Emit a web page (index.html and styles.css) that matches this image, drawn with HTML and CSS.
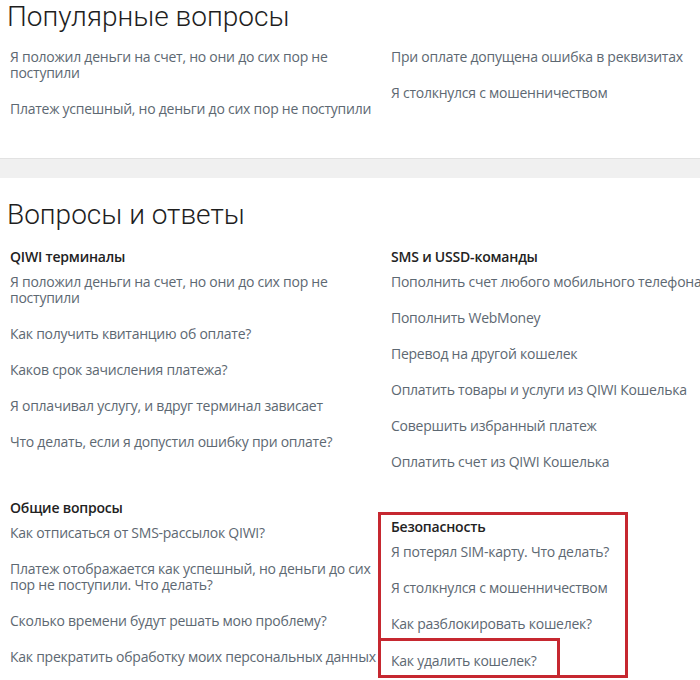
FILE: index.html
```html
<html>
  <head>
    <title>Вопросы и ответы</title>
    <meta name="viewport" content="width=device-width, initial-scale=1.0">
    <link rel="stylesheet" href="styles.css">
  </head>
  <body>
    <div class="section popular">
      <h1 class="title">Популярные вопросы</h1>
      <div class="cols">
        <div class="group">
          <a class="link" href="#">Я положил деньги на счет, но они до сих пор не поступили</a>
          <a class="link" href="#">Платеж успешный, но деньги до сих пор не поступили</a>
        </div>
        <div class="group">
          <a class="link" href="#">При оплате допущена ошибка в реквизитах</a>
          <a class="link" href="#">Я столкнулся с мошенничеством</a>
        </div>
      </div>
    </div>

    <div class="band"></div>

    <div class="section faq">
      <h1 class="title">Вопросы и ответы</h1>
      <div class="cols">
        <div class="group">
          <div class="group-title">QIWI терминалы</div>
          <a class="link" href="#">Я положил деньги на счет, но они до сих пор не поступили</a>
          <a class="link" href="#">Как получить квитанцию об оплате?</a>
          <a class="link" href="#">Каков срок зачисления платежа?</a>
          <a class="link" href="#">Я оплачивал услугу, и вдруг терминал зависает</a>
          <a class="link" href="#">Что делать, если я допустил ошибку при оплате?</a>
        </div>
        <div class="group">
          <div class="group-title">SMS и USSD-команды</div>
          <a class="link nowrap" href="#">Пополнить счет любого мобильного телефона</a>
          <a class="link" href="#">Пополнить WebMoney</a>
          <a class="link" href="#">Перевод на другой кошелек</a>
          <a class="link" href="#">Оплатить товары и услуги из QIWI Кошелька</a>
          <a class="link" href="#">Совершить избранный платеж</a>
          <a class="link" href="#">Оплатить счет из QIWI Кошелька</a>
        </div>
        <div class="group">
          <div class="group-title">Общие вопросы</div>
          <a class="link" href="#">Как отписаться от SMS-рассылок QIWI?</a>
          <a class="link" href="#">Платеж отображается как успешный, но деньги до сих пор не поступили. Что делать?</a>
          <a class="link" href="#">Сколько времени будут решать мою проблему?</a>
          <a class="link" href="#">Как прекратить обработку моих персональных данных</a>
        </div>
        <div class="group marked">
          <div class="group-title">Безопасность</div>
          <a class="link" href="#">Я потерял SIM-карту. Что делать?</a>
          <a class="link" href="#">Я столкнулся с мошенничеством</a>
          <a class="link" href="#">Как разблокировать кошелек?</a>
          <a class="link marked-item" href="#">Как удалить кошелек?</a>
        </div>
      </div>
    </div>
  </body>
</html>
```

FILE: styles.css
```css
body {
  margin: 0;
  overflow: hidden;
  background: #fff;
  font-family: "Open Sans", "Noto Sans", sans-serif;
}

.section {
  padding-left: 7px;
  overflow: hidden;
}

.popular {
  padding-bottom: 41px;
}

.faq {
  padding-top: 20px;
}

.title {
  margin: 0;
  font-family: Roboto, "Open Sans", sans-serif;
  font-size: 28px;
  line-height: 34px;
  font-weight: 300;
  color: #1e1e1e;
}

.popular .title {
  margin-bottom: 15px;
}

.faq .title {
  margin-bottom: 17px;
}

.cols {
  display: grid;
  grid-template-columns: 381px 1fr;
  row-gap: 30px;
  padding-left: 3px;
}

.group {
  display: flex;
  flex-direction: column;
  align-items: flex-start;
  min-width: 0;
}

.group-title {
  font-size: 14px;
  line-height: 16px;
  font-weight: 600;
  letter-spacing: -0.2px;
  color: #222;
  margin-bottom: 9px;
}

.link {
  font-size: 14px;
  line-height: 16px;
  letter-spacing: -0.25px;
  color: #5d6872;
  text-decoration: none;
  margin-bottom: 20px;
  max-width: 372px;
}

.group .link:last-child {
  margin-bottom: 0;
}

.nowrap {
  white-space: nowrap;
  max-width: none;
}

.band {
  height: 19px;
  background: #f0f0f0;
  border-top: 1px solid #e2e2e2;
}

.marked {
  width: 250px;
  box-sizing: border-box;
  margin-left: -13px;
  margin-top: 12px;
  padding: 4px 0 0 10px;
  border: 3px solid #c62830;
}

.marked .marked-item {
  width: 179px;
  box-sizing: border-box;
  margin: -14px 0 0 -10px;
  padding: 12px 0 6px 10px;
  border-top: 3px solid #c62830;
  border-right: 3px solid #c62830;
}
```
